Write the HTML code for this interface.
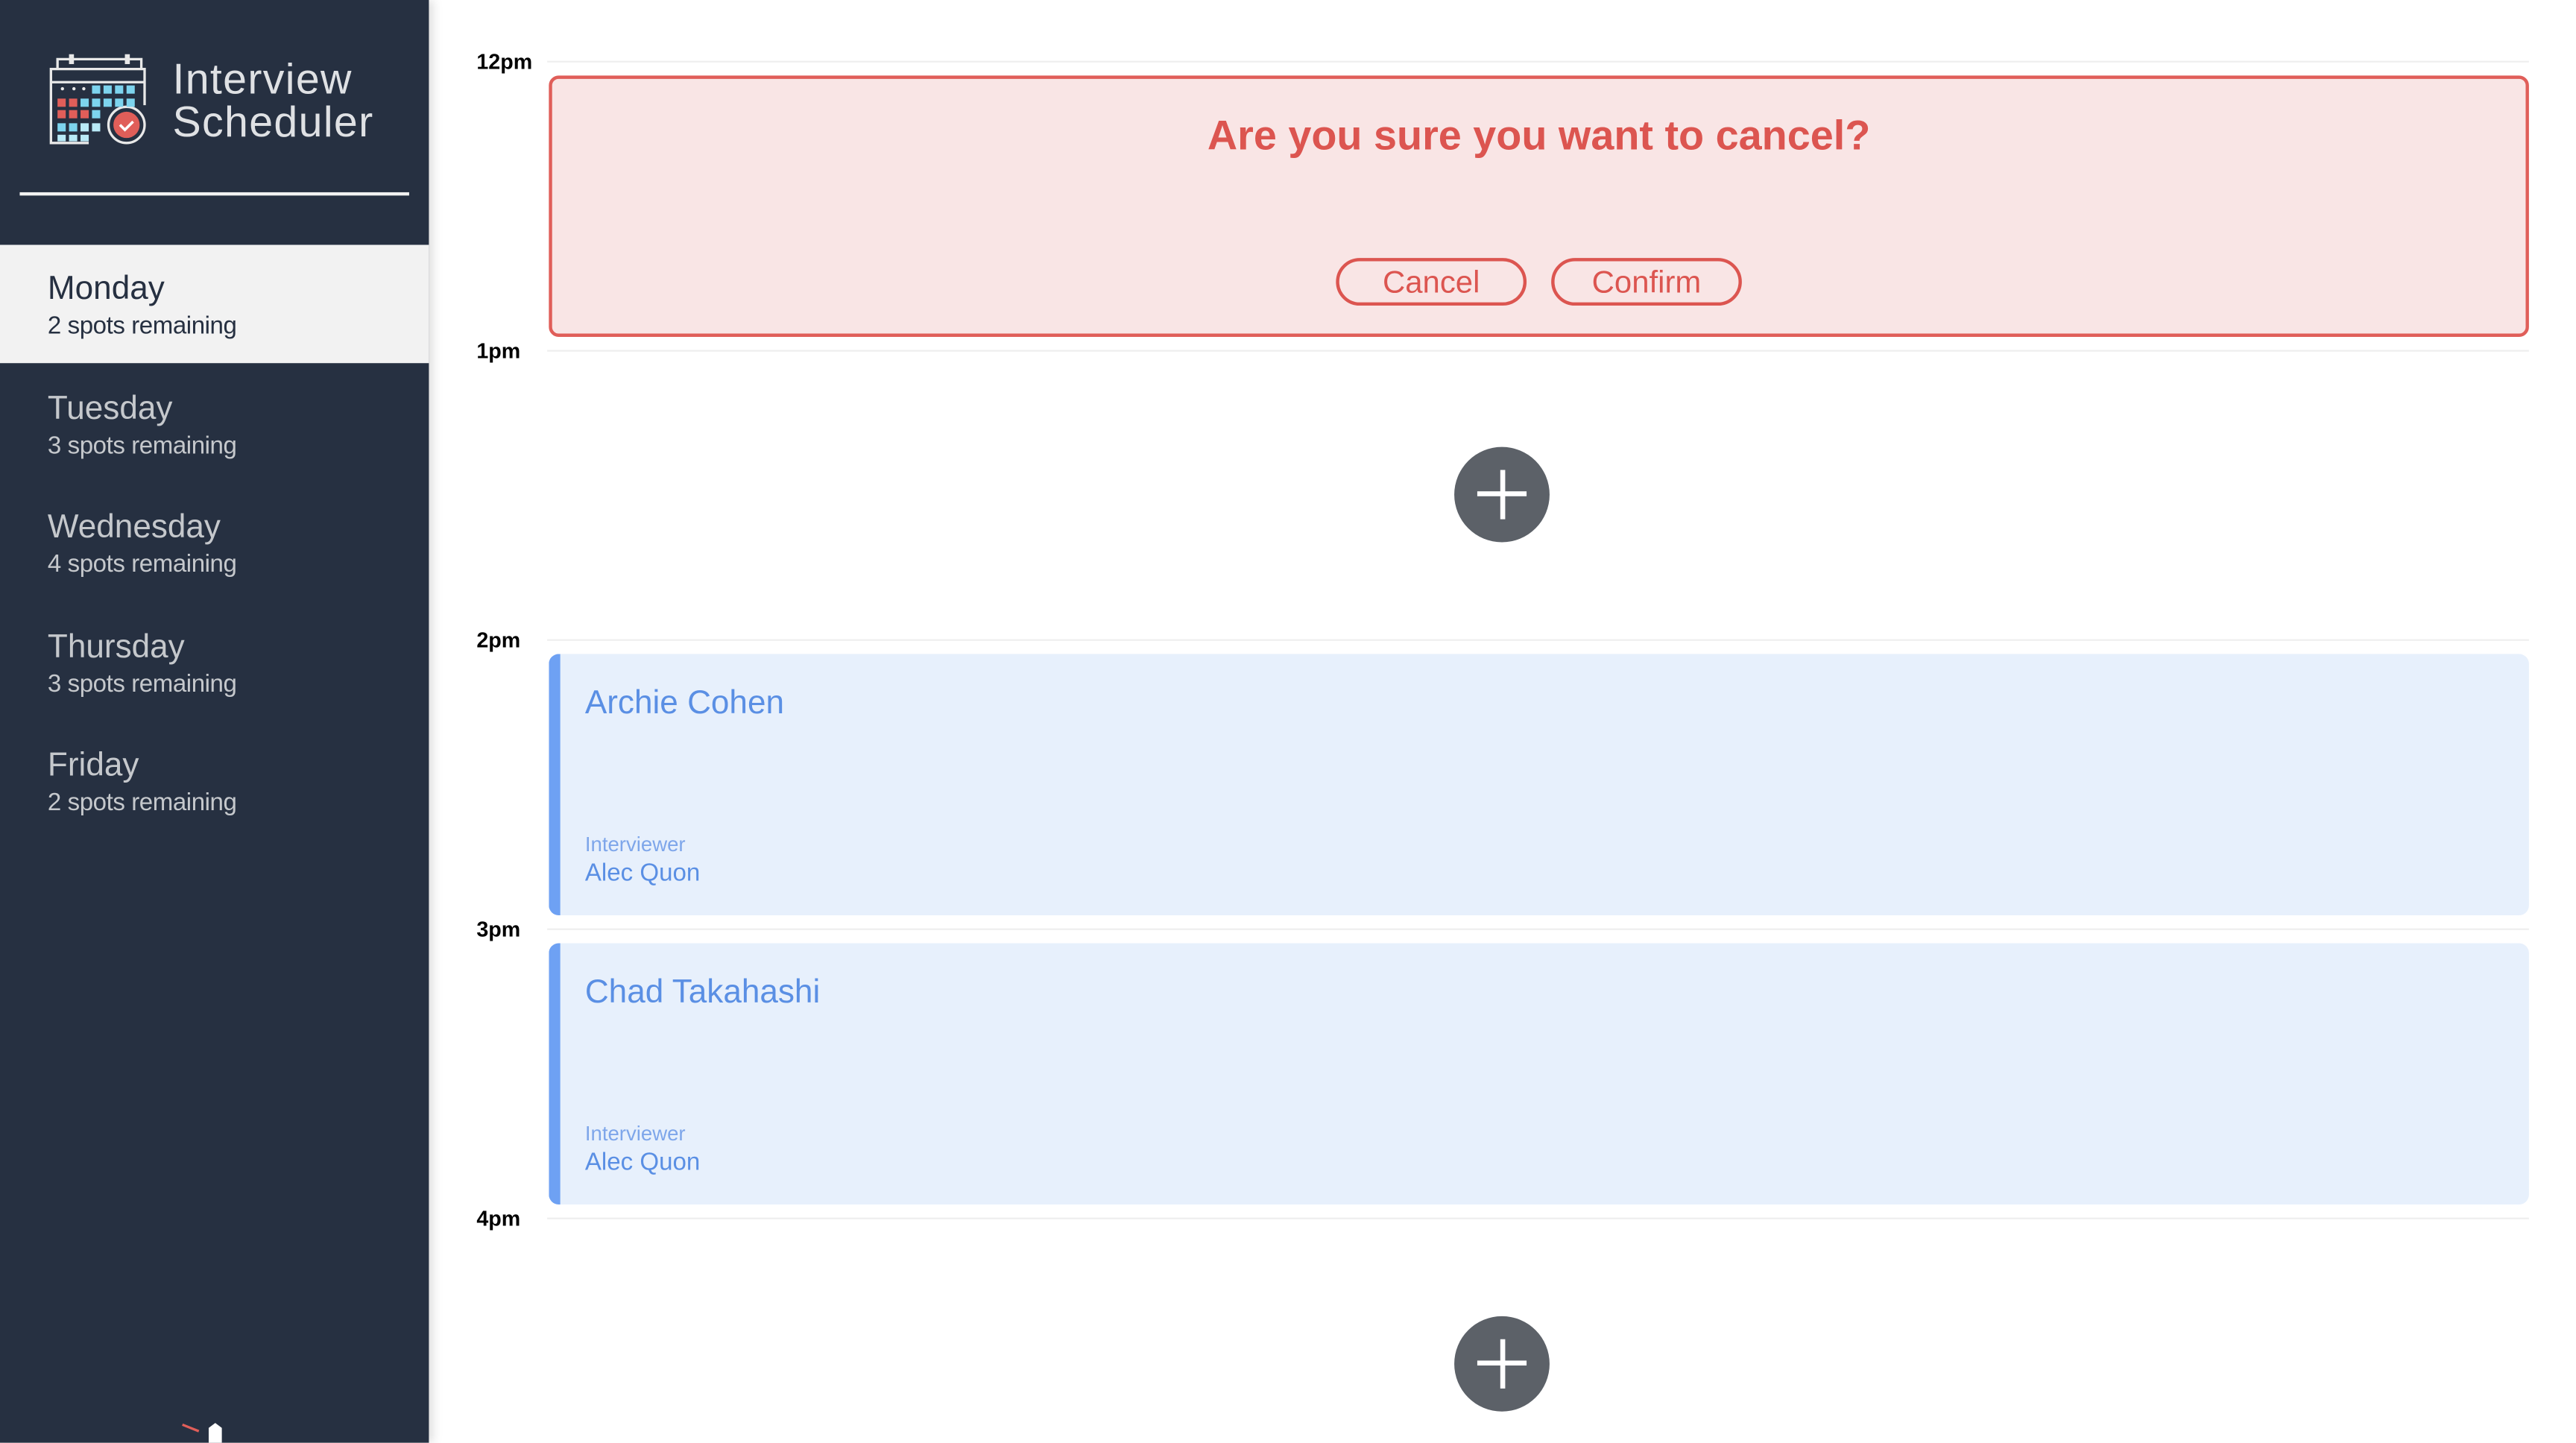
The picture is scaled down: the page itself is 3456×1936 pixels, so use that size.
<!DOCTYPE html>
<html><head><meta charset="utf-8"><style>
*{margin:0;padding:0;box-sizing:border-box}
html,body{width:3456px;height:1934px;overflow:hidden;background:#fff;font-family:"Liberation Sans",sans-serif}
#w{position:absolute;left:0;top:0;width:1568px;height:878px;transform:scale(2.2046);transform-origin:0 0}
.sb{position:absolute;left:0;top:0;width:261px;height:878px;background:#263041;box-shadow:2px 0 6px rgba(0,0,0,.15)}
.logo-t{position:absolute;left:105px;top:35px;color:#dfe1e4;font-size:26px;line-height:26px;letter-spacing:.6px;font-weight:300}
.hr{position:absolute;left:12px;top:117px;width:237px;height:2px;background:#f2f2f2}
.day{position:absolute;left:0;width:261px;height:72px;padding-left:29px;color:#c5c8cc}
.day b{display:block;font-weight:normal;font-size:20px;padding-top:15px;line-height:24px}
.day span{display:block;font-size:15px;line-height:21px;letter-spacing:-.2px}
.sel{background:#f2f2f2;color:#263041}
.tl{position:absolute;left:290px;font-size:13px;font-weight:bold;color:#000}
.ln{position:absolute;left:333px;width:1206px;height:1px;background:#eee}
.cx{position:absolute;left:334px;top:46px;width:1205px;height:159px;border:2px solid #e05e59;border-radius:6px;background:#f9e5e5}
.cx h1{position:absolute;left:0;right:0;top:21px;text-align:center;color:#dc5550;font-size:25.3px;font-weight:bold}
.bt{position:absolute;top:109px;width:116px;height:29px;border:2px solid #dc5550;border-radius:15px;color:#dc5550;font-size:19px;text-align:center;line-height:27px}
.ap{position:absolute;left:334px;width:1205px;height:159px;background:#e7f0fc;border-left:7px solid #6ea1f3;border-radius:6px;color:#5a8fe4}
.ap .n{position:absolute;left:15px;top:19px;font-size:20px}
.ap .i{position:absolute;left:15px;top:109px;font-size:12.5px;color:#7ea6ea}
.ap .q{position:absolute;left:15px;top:125px;font-size:15px}
.pl{position:absolute;width:58px;height:58px;border-radius:50%;background:#5c6168}
.pl:before,.pl:after{content:"";position:absolute;background:#fff;left:14px;top:27px;width:30px;height:3px}
.pl:after{left:27.5px;top:14px;width:3px;height:30px}
</style></head><body><div id="w">
<div class="sb">
<svg style="position:absolute;left:30px;top:32px" width="60" height="58" viewBox="0 0 60 58">
<g fill="none" stroke="#e8e8e8" stroke-width="1.5"><path d="M24 55H1V10H58V32"/><path d="M1 18H58"/><path d="M5 10V4H56V10"/><circle cx="47" cy="44" r="11"/></g>
<g fill="#e8e8e8"><rect x="12" y="1" width="3" height="6"/><rect x="46" y="1" width="3" height="6"/><circle cx="8" cy="22" r="1"/><circle cx="15" cy="22" r="1"/><circle cx="21" cy="22" r="1"/></g>
<g fill="#7dd4ee"><rect x="26" y="20" width="5" height="5"/><rect x="33" y="20" width="5" height="5"/><rect x="40" y="20" width="5" height="5"/><rect x="47" y="20" width="5" height="5"/><rect x="19" y="28" width="5" height="5"/><rect x="26" y="28" width="5" height="5"/><rect x="33" y="28" width="5" height="5"/><rect x="40" y="28" width="5" height="5"/><rect x="47" y="28" width="5" height="5"/><rect x="26" y="35" width="5" height="5"/><rect x="5" y="43" width="5" height="5"/><rect x="12" y="43" width="5" height="5"/><rect x="19" y="43" width="5" height="5" fill="#b9eaf7"/><rect x="26" y="43" width="5" height="5" fill="#b9eaf7"/><rect x="5" y="50" width="5" height="4" fill="#b9eaf7"/><rect x="12" y="50" width="5" height="4" fill="#b9eaf7"/><rect x="19" y="50" width="5" height="4" fill="#b9eaf7"/></g>
<g fill="#e05e59"><rect x="5" y="28" width="5" height="5"/><rect x="12" y="28" width="5" height="5"/><rect x="5" y="35" width="5" height="5"/><rect x="12" y="35" width="5" height="5"/><rect x="19" y="35" width="5" height="5"/><circle cx="47" cy="44" r="8"/></g>
<path d="M43 44l3 3 5-5" stroke="#fff" stroke-width="1.6" fill="none"/>
</svg>
<div class="logo-t">Interview<br>Scheduler</div>
<div class="hr"></div>
<div class="day sel" style="top:149px"><b>Monday</b><span>2 spots remaining</span></div>
<div class="day" style="top:222px"><b>Tuesday</b><span>3 spots remaining</span></div>
<div class="day" style="top:294px"><b>Wednesday</b><span>4 spots remaining</span></div>
<div class="day" style="top:367px"><b>Thursday</b><span>3 spots remaining</span></div>
<div class="day" style="top:439px"><b>Friday</b><span>2 spots remaining</span></div>
<svg style="position:absolute;left:108px;top:864px" width="30" height="14"><path d="M3 3l10 4" stroke="#e05e59" stroke-width="1.5"/><path d="M19 5l4-3 4 3v9h-8z" fill="#fff"/></svg>
</div>
<div class="tl" style="top:30px">12pm</div><div class="ln" style="top:37px"></div>
<div class="tl" style="top:206px">1pm</div><div class="ln" style="top:213px"></div>
<div class="tl" style="top:382px">2pm</div><div class="ln" style="top:389px"></div>
<div class="tl" style="top:558px">3pm</div><div class="ln" style="top:565px"></div>
<div class="tl" style="top:734px">4pm</div><div class="ln" style="top:741px"></div>
<div class="cx"><h1>Are you sure you want to cancel?</h1>
<div class="bt" style="left:477px">Cancel</div><div class="bt" style="left:608px">Confirm</div></div>
<div class="pl" style="left:885px;top:272px"></div>
<div class="ap" style="top:398px"><div class="n">Archie Cohen</div><div class="i">Interviewer</div><div class="q">Alec Quon</div></div>
<div class="ap" style="top:574px"><div class="n">Chad Takahashi</div><div class="i">Interviewer</div><div class="q">Alec Quon</div></div>
<div class="pl" style="left:885px;top:801px"></div>
</div></body></html>
